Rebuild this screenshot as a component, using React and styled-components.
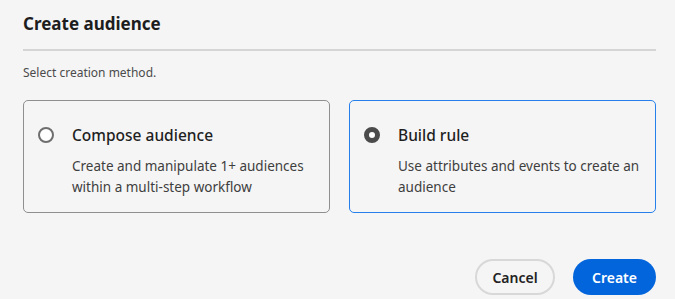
import React, { useState } from "react"
import styled, { createGlobalStyle } from "styled-components"

const Global = createGlobalStyle`
  html, body {
    margin: 0;
    padding: 0;
    background: #f5f5f5;
  }
  body {
    font-family: "Noto Sans", "Open Sans", sans-serif;
    color: #222;
  }
`

const OPTIONS = [
  {
    id: "compose",
    title: "Compose audience",
    text: "Create and manipulate 1+ audiences within a multi-step workflow",
  },
  {
    id: "rule",
    title: "Build rule",
    text: "Use attributes and events to create an audience",
  },
]

export default function App() {
  const [method, setMethod] = useState("rule")

  return (
    <>
      <Global />
      <Dialog>
        <Heading>Create audience</Heading>
        <Divider />
        <Hint>Select creation method.</Hint>

        <Cards>
          {OPTIONS.map((o) => (
            <Card
              key={o.id}
              $selected={method === o.id}
              onClick={() => setMethod(o.id)}
            >
              <Radio $checked={method === o.id} />
              <CardBody>
                <CardTitle>{o.title}</CardTitle>
                <CardText>{o.text}</CardText>
              </CardBody>
            </Card>
          ))}
        </Cards>

        <Footer>
          <Button>Cancel</Button>
          <Button $primary>Create</Button>
        </Footer>
      </Dialog>
    </>
  )
}

const Dialog = styled.div`
  padding: 12px 19px 0 23px;
  height: 299px;
  box-sizing: border-box;
  display: flex;
  flex-direction: column;
`
const Heading = styled.h2`
  margin: 0;
  font-size: 17px;
  font-weight: 700;
  line-height: 24px;
  color: #1d1d1d;
`
const Divider = styled.div`
  height: 2px;
  background: #d5d5d5;
  margin-top: 13px;
`
const Hint = styled.p`
  margin: 14px 0 0;
  font-size: 12px;
  line-height: 16px;
  color: #4b4b4b;
`
const Cards = styled.div`
  display: grid;
  grid-template-columns: 1fr 1fr;
  gap: 19px;
  margin-top: 19px;
`
const Card = styled.div`
  display: flex;
  align-items: flex-start;
  gap: 18px;
  height: 113px;
  box-sizing: border-box;
  padding: 24px 14px 0;
  border: 1.5px solid ${(p) => (p.$selected ? "#2680eb" : "#8f8f8f")};
  border-radius: 5px;
  cursor: pointer;
`
const Radio = styled.span`
  flex: none;
  width: 16px;
  height: 16px;
  margin-top: 2px;
  border-radius: 50%;
  box-sizing: border-box;
  background: #fff;
  border: ${(p) => (p.$checked ? "5px solid #4b4b4b" : "2px solid #6e6e6e")};
`
const CardBody = styled.div`
  display: flex;
  flex-direction: column;
  gap: 11px;
`
const CardTitle = styled.div`
  font-size: 15.5px;
  font-weight: 500;
  line-height: 20px;
  color: #1f1f1f;
`
const CardText = styled.div`
  font-size: 13.5px;
  line-height: 21px;
  color: #3e3e3e;
`
const Footer = styled.div`
  display: flex;
  justify-content: flex-end;
  gap: 18px;
  margin-top: auto;
  padding-bottom: 4px;
`
const Button = styled.button`
  height: 36px;
  width: ${(p) => (p.$primary ? "83px" : "80px")};
  padding: 0;
  border-radius: 18px;
  font-family: inherit;
  font-size: 14px;
  font-weight: 600;
  cursor: pointer;
  border: ${(p) => (p.$primary ? "none" : "2px solid #d8d8d8")};
  background: ${(p) => (p.$primary ? "#0265dc" : "#f5f5f5")};
  color: ${(p) => (p.$primary ? "#fff" : "#222")};
`
